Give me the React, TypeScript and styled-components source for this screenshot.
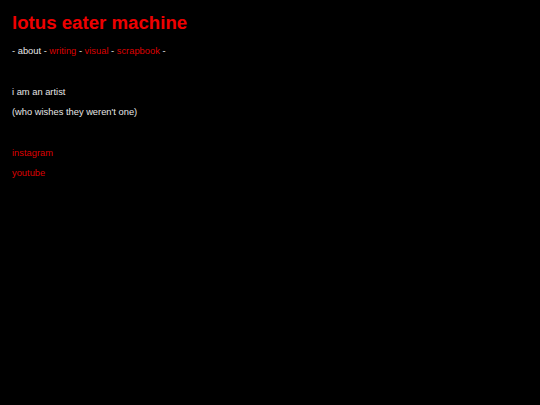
import * as React from 'react'
import styled, { createGlobalStyle } from 'styled-components'

const GlobalStyle = createGlobalStyle`
  html, body {
    margin: 0;
    padding: 0;
    background: #000;
  }
  body {
    font-family: "Liberation Sans", Arial, sans-serif;
    color: #e6e6e6;
  }
`

const Page = styled.div`
  box-sizing: border-box;
  min-height: 405px;
  padding: 13px 12px;
  background: #000;
`

const Title = styled.h1`
  margin: 0;
  font-size: 18.67px;
  line-height: 20px;
  font-weight: bold;
  color: #ee0000;
`

const Nav = styled.nav`
  margin-top: 12px;
  font-size: 9.33px;
  line-height: 12px;
  color: #e6e6e6;
`

const NavLink = styled.a<{ $current?: boolean }>`
  color: ${p => (p.$current ? '#e6e6e6' : '#dd0000')};
  text-decoration: none;
`

const Section = styled.section`
  margin-top: 29px;
  display: flex;
  flex-direction: column;
  gap: 8px;
`

const Line = styled.p`
  margin: 0;
  font-size: 9.33px;
  line-height: 12px;
`

const ExtLink = styled.a`
  color: #dd0000;
  text-decoration: none;
  font-size: 9.33px;
  line-height: 12px;
`

const links = ['about', 'writing', 'visual', 'scrapbook']

export default function App() {
    return <Page>
        <GlobalStyle/>
        <Title>lotus eater machine</Title>
        <Nav>
            - { links.map((l, i) => <React.Fragment key={ l }>
                <NavLink href="#" $current={ i === 0 }>{ l }</NavLink> -{ ' ' }
            </React.Fragment>) }
        </Nav>
        <Section>
            <Line>i am an artist</Line>
            <Line>(who wishes they weren't one)</Line>
        </Section>
        <Section>
            <ExtLink href="#">instagram</ExtLink>
            <ExtLink href="#">youtube</ExtLink>
        </Section>
    </Page>
}
